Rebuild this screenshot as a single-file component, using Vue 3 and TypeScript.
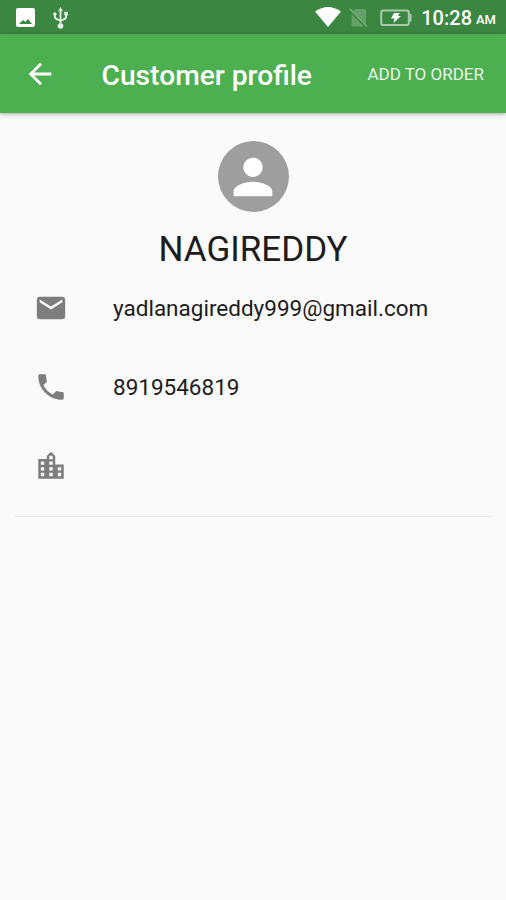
<script setup lang="ts">
interface ContactRow {
  id: string
  icon: string
  text: string
}

const rows: ContactRow[] = [
  {
    id: 'email',
    icon: 'M20 4H4c-1.1 0-1.99.9-1.99 2L2 18c0 1.1.9 2 2 2h16c1.1 0 2-.9 2-2V6c0-1.1-.9-2-2-2zm0 4l-8 5-8-5V6l8 5 8-5v2z',
    text: 'yadlanagireddy999@gmail.com',
  },
  {
    id: 'phone',
    icon: 'M6.62 10.79c1.44 2.83 3.76 5.14 6.59 6.59l2.2-2.2c.27-.27.67-.36 1.02-.24 1.12.37 2.33.57 3.57.57.55 0 1 .45 1 1V20c0 .55-.45 1-1 1-9.39 0-17-7.61-17-17 0-.55.45-1 1-1h3.5c.55 0 1 .45 1 1 0 1.25.2 2.45.57 3.57.11.35.03.74-.25 1.02l-2.2 2.2z',
    text: '8919546819',
  },
  {
    id: 'city',
    icon: 'M15 11V5l-2-2.200Q12 1.700 11 2.800L9 5v2H3v14h18V11h-6zM7.200 19.200H4.800v-2.400h2.400v2.400zm0-4H4.800v-2.400h2.400v2.400zm0-4H4.800V8.800h2.400v2.400zm6 8h-2.400v-2.400h2.400v2.400zm0-4h-2.400v-2.400h2.400v2.400zm0-4h-2.400V8.800h2.400v2.400zm0-4h-2.400V4.800h2.400v2.400zm6 12h-2.400v-2.400h2.400v2.400zm0-4h-2.400v-2.400h2.400v2.400z',
    text: '',
  },
]
</script>

<template>
  <div class="screen">
    <div class="status">
      <svg class="photo" viewBox="0 0 19 19"><path fill-rule="evenodd" d="M2 0h15q2 0 2 2v15q0 2-2 2H2q-2 0-2-2V2q0-2 2-2zM3 16h13l-4-5-2.500 3L7 12z" /></svg>
      <svg class="usb" viewBox="0 0 15 22"><path class="wire" d="M7.500 2v18M1.800 7.500V9q0 3 3 3.500l2.700 1.500M13.200 6.500V9q0 3-3 3.500L7.500 14" /><path d="M7.500 0l2.500 4.200H5z" /><circle cx="1.900" cy="7" r="1.800" /><path d="M11.300 4.800h3.600v3.600h-3.600z" /><circle cx="7.500" cy="19" r="2.800" /></svg>
      <span class="grow"></span>
      <svg class="wifi" viewBox="0 0 26 20"><path d="M0 4.500Q13-4.500 26 4.500L13 20z" /></svg>
      <svg class="sim" viewBox="0 0 19 20"><path class="faint" d="M7 1h8.500Q17 1 17 2.500V16L4.500 3.500zM2.500 6L15 18.500H4Q2.500 18.500 2.500 17z" /><path class="slash" d="M.8.800L18 18.500" /></svg>
      <svg class="battery" viewBox="0 0 32 18"><rect class="case" x="1.200" y="1.500" width="27.600" height="14.500" rx="2" /><path class="case-tip" d="M29.500 5h2v7.500h-2z" /><path d="M14 4h5.500l-1.500 3h3L13.500 14l1-4.500H11z" /></svg>
      <span class="clock">10:28</span><span class="meridiem">AM</span>
    </div>

    <header class="toolbar">
      <svg class="back" viewBox="0 0 24 24"><path d="M20 11H7.830l5.590-5.590L12 4l-8 8 8 8 1.410-1.410L7.830 13H20v-2z" /></svg>
      <h1 class="title">Customer profile</h1>
      <button class="action" type="button">ADD TO ORDER</button>
    </header>

    <main class="profile">
      <div class="avatar">
        <svg viewBox="0 0 24 24"><path d="M12 12c2.210 0 4-1.790 4-4s-1.790-4-4-4-4 1.790-4 4 1.790 4 4 4zm0 2c-2.670 0-8 1.340-8 4v2h16v-2c0-2.660-5.330-4-8-4z" /></svg>
      </div>
      <h2 class="name">NAGIREDDY</h2>
      <ul class="contacts">
        <li v-for="row in rows" :key="row.id" class="row">
          <svg class="row-icon" viewBox="0 0 24 24"><path :d="row.icon" /></svg>
          <span class="row-text">{{ row.text }}</span>
        </li>
      </ul>
      <hr class="divider" />
    </main>
  </div>
</template>

<style>
body {
  margin: 0;
  background: #fafafa;
}
</style>

<style scoped>
.screen {
  display: flex;
  flex-direction: column;
  height: 900px;
  background: #fafafa;
  font-family: Roboto, sans-serif;
  color: #1c1c1c;
  overflow: hidden;
}
svg {
  display: block;
  flex: none;
  fill: currentColor;
}
.status {
  display: flex;
  align-items: center;
  box-sizing: border-box;
  height: 34px;
  padding: 0 10px 0 16px;
  background: #3b8640;
  color: #fff;
}
.photo {
  width: 19px;
  height: 19px;
}
.usb {
  width: 15px;
  height: 22px;
  margin: 1px 0 0 18px;
  color: #e4f0e4;
}
.wire {
  fill: none;
  stroke: currentColor;
  stroke-width: 1.8;
}
.grow {
  flex: 1;
}
.wifi {
  width: 26px;
  height: 20px;
}
.sim {
  width: 19px;
  height: 20px;
  margin: 1px 0 0 8px;
}
.faint {
  fill: #65a269;
}
.slash {
  fill: none;
  stroke: #7eb181;
  stroke-width: 1.5;
}
.battery {
  width: 32px;
  height: 18px;
  margin: 1px 0 0 12px;
}
.case {
  fill: none;
  stroke: #a9cbab;
  stroke-width: 2;
}
.case-tip {
  fill: #a9cbab;
}
.clock {
  margin-left: 9px;
  font-size: 20px;
  font-weight: 500;
  line-height: 34px;
  padding-top: 2px;
}
.meridiem {
  margin-left: 4px;
  padding-top: 5px;
  font-size: 13px;
  font-weight: 500;
}
.toolbar {
  display: flex;
  align-items: center;
  flex: none;
  box-sizing: border-box;
  height: 79px;
  padding: 0 22px 0 23px;
  background: #4caf50;
  color: #fff;
  box-shadow: 0 1px 4px rgba(0, 0, 0, 0.35);
}
.back {
  width: 34px;
  height: 34px;
}
.title {
  flex: 1;
  margin: 4px 0 0 44.5px;
  font-size: 28.2px;
  font-weight: 500;
  line-height: 34px;
  white-space: nowrap;
}
.action {
  padding: 0;
  border: 0;
  background: none;
  font: 400 17px/24px Roboto, sans-serif;
  color: #e9f6e9;
  white-space: nowrap;
}
.profile {
  display: flex;
  flex-direction: column;
  align-items: center;
  padding-top: 28px;
}
.avatar {
  display: flex;
  align-items: center;
  justify-content: center;
  width: 71px;
  height: 71px;
  border-radius: 50%;
  background: #9e9e9e;
  color: #fff;
}
.avatar svg {
  width: 58px;
  height: 58px;
}
.name {
  margin: 17px 0 0;
  padding-top: 1px;
  font-size: 35px;
  font-weight: 400;
  line-height: 39px;
}
.contacts {
  align-self: stretch;
  margin: 0;
  padding: 0 34px;
  list-style: none;
}
.row {
  display: flex;
  align-items: center;
  height: 78.7px;
}
.row-icon {
  width: 34px;
  height: 34px;
  color: #7d7d7d;
}
.row-text {
  margin-left: 45px;
  font-size: 22.5px;
  line-height: 28px;
}
.divider {
  width: 477px;
  height: 1px;
  margin: 11px 0 0;
  border: 0;
  background: #e6e6e6;
}
</style>
